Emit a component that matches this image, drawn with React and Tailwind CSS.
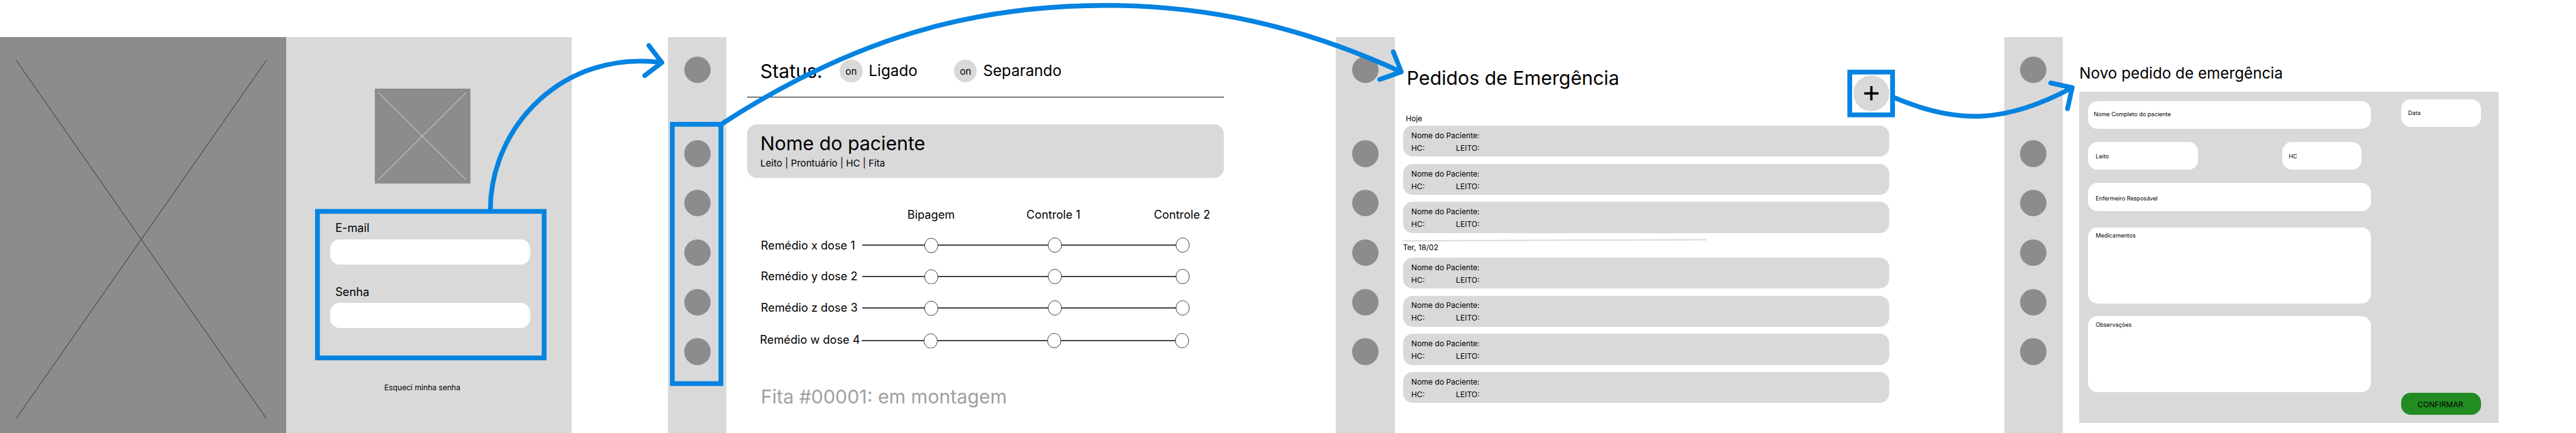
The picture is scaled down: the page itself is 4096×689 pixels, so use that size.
const menuItems = [0, 1, 2, 3, 4];

function Rail() {
  return (
    <aside className="flex w-[93.3px] shrink-0 flex-col items-center bg-[#d9d9d9] pt-[31.4px]">
      <span className="size-[42.4px] shrink-0 rounded-full bg-[#8c8c8c]" />
      <div className="mt-[90.9px] flex flex-col gap-[36.4px]">
        {menuItems.map((i) => (
          <span key={i} className="size-[42.4px] rounded-full bg-[#8c8c8c]" />
        ))}
      </div>
    </aside>
  );
}

function Login() {
  return (
    <section className="flex w-[909.2px] shrink-0">
      <div className="w-[454.6px] bg-[#8c8c8c]">
        <svg className="block h-[630.4px] w-[454.6px]" viewBox="0 0 454.6 630.4" fill="none" stroke="#2e2e2e" strokeWidth="0.9">
          <path d="M26 37.3 423.3 606.6M423.3 37.3 26 606.6" />
        </svg>
      </div>
      <div className="flex w-[454.6px] flex-col bg-[#d9d9d9]">
        <div className="mt-[82.2px] ml-[141.7px] size-[151.5px] bg-[#8c8c8c]">
          <svg className="block size-full" viewBox="0 0 151.5 151.5" fill="none" stroke="#f0f0f0" strokeWidth="0.9">
            <path d="M6 6.5 145 144.8M145 6.5 6 144.8" />
          </svg>
        </div>
        <form className="mt-[59px] ml-[70.4px] flex w-[317.6px] flex-col self-start">
          <label className="pl-[8.2px] text-[18.18px] leading-[22px]">E-mail</label>
          <div className="mt-[8.2px] h-[39.4px] rounded-[15.15px] bg-white" />
          <label className="mt-[32px] pl-[8.2px] text-[18.18px] leading-[22px]">Senha</label>
          <div className="mt-[7.3px] h-[39.4px] rounded-[15.15px] bg-white" />
        </form>
        <a className="mt-[87.6px] ml-[156.3px] text-[12.12px] leading-[15px]">Esqueci minha senha</a>
      </div>
    </section>
  );
}

function Toggle({ label, className }) {
  return (
    <div className={`flex items-center gap-[9.8px] ${className}`}>
      <span className="flex size-[36.4px] items-center justify-center rounded-full bg-[#d9d9d9] text-[15.15px] leading-none">on</span>
      <span className="text-[24.25px] leading-[30px]">{label}</span>
    </div>
  );
}

const doses = [
  { name: "Remédio x dose 1", row: "mt-[26.1px]", text: "" },
  { name: "Remédio y dose 2", row: "mt-[25.6px]", text: "pb-[1.8px]" },
  { name: "Remédio z dose 3", row: "mt-[26px]", text: "pb-[3.6px]" },
  { name: "Remédio w dose 4", row: "mt-[27.2px] -ml-[1.5px]", text: "pb-[3.4px]" },
];

function Dose({ name, row, text }) {
  return (
    <div className={`flex h-[24.2px] items-center ${row}`}>
      <span className={`w-[161.4px] shrink-0 text-[18.18px] leading-[22px] whitespace-nowrap ${text}`}>{name}</span>
      <svg className="block h-[24.2px] w-[522px] shrink-0" viewBox="0 0 522 24.2" fill="white" stroke="black">
        <path d="M0 12.1H500" strokeWidth="1.5" />
        <ellipse cx="109.7" cy="12.6" rx="10.6" ry="11.5" strokeWidth="0.76" />
        <ellipse cx="306.3" cy="12" rx="10.6" ry="11.5" strokeWidth="0.76" />
        <ellipse cx="509.6" cy="12" rx="10.6" ry="11.5" strokeWidth="0.76" />
      </svg>
    </div>
  );
}

function Dispenser() {
  return (
    <section className="ml-[152.9px] flex w-[909.2px] shrink-0">
      <Rail />
      <main className="ml-[32.6px] w-[757.7px]">
        <header className="flex h-[96px] items-center border-b border-black pt-[14px] pl-[20.8px]">
          <h1 className="w-[126.4px] text-[30.3px] leading-[36px]">Status:</h1>
          <Toggle label="Ligado" className="w-[181.8px]" />
          <Toggle label="Separando" />
        </header>
        <div className="mt-[43.5px] h-[84.9px] rounded-[15.15px] bg-[#d9d9d9] pt-[11.8px] pl-[21px]">
          <h2 className="text-[30.3px] leading-[36px]">Nome do paciente</h2>
          <p className="mt-[4.2px] text-[15.15px] leading-[20px]">Leito | Prontuário | HC | Fita</p>
        </div>
        <div className="mt-[47.3px] flex pl-[254.8px] text-[18.18px] leading-[22px]">
          <span className="w-[189.3px]">Bipagem</span>
          <span className="w-[202.7px]">Controle 1</span>
          <span>Controle 2</span>
        </div>
        <div className="pl-[21.9px]">
          {doses.map((d) => (
            <Dose key={d.name} {...d} />
          ))}
          <p className="mt-[59.3px] text-[30.3px] leading-[36px] text-[#a0a0a0]">Fita #00001: em montagem</p>
        </div>
      </main>
    </section>
  );
}

function Order() {
  return (
    <li className="h-[49.25px] rounded-[15.15px] bg-[#d9d9d9] pt-[5.8px] pl-[13.4px] text-[12.12px] leading-[20px]">
      <p>Nome do Paciente:</p>
      <p className="flex">
        <span className="w-[71px]">HC:</span>
        <span>LEITO:</span>
      </p>
    </li>
  );
}

function Orders() {
  return (
    <section className="ml-[153.2px] flex w-[909.2px] shrink-0">
      <Rail />
      <main className="ml-[12.9px] w-[773.6px]">
        <header className="flex h-[128px] justify-between">
          <h1 className="mt-[47.9px] ml-[6.2px] text-[30.3px] leading-[36px]">Pedidos de Emergência</h1>
          <button className="mt-[61.2px] size-[56.8px] rounded-full bg-[#d9d9d9]">
            <svg className="block size-full" viewBox="0 0 56.8 56.8" stroke="black" strokeWidth="3.7">
              <path d="M17.3 28.6H39.9M28.6 16.9V39.7" />
            </svg>
          </button>
        </header>
        <p className="-mt-[5.3px] pl-[4.5px] text-[12.12px] leading-[15px]">Hoje</p>
        <ul className="mt-[3.9px] flex flex-col gap-[11.37px]">
          {[1, 2, 3].map((i) => (
            <Order key={i} />
          ))}
        </ul>
        <svg className="mt-[9.3px] block h-[5px] w-[483px]" viewBox="0 0 483 5" stroke="#d9d9d9" strokeWidth="2">
          <path d="M0 3.2 483 1.5" />
        </svg>
        <p className="mt-[1.3px] text-[12.12px] leading-[15px]">Ter, 18/02</p>
        <ul className="mt-[8.8px] flex flex-col gap-[11.37px]">
          {[1, 2, 3, 4].map((i) => (
            <Order key={i} />
          ))}
        </ul>
      </main>
    </section>
  );
}

function Field({ label, className }) {
  return <div className={`flex rounded-[15.15px] bg-white text-[9.09px] leading-[11px] ${className}`}>{label}</div>;
}

function NewOrder() {
  return (
    <section className="ml-[153px] flex w-[909.2px] shrink-0">
      <Rail />
      <main className="ml-[25.8px] w-[667.6px]">
        <h1 className="mt-[43.9px] pl-[0.6px] text-[24.25px] leading-[30px]">Novo pedido de emergência</h1>
        <div className="mt-[14px] flex h-[526.7px] justify-between bg-[#d9d9d9] pr-[28.1px] pl-[14.6px]">
          <div className="flex w-[449.4px] flex-col pt-[14.1px]">
            <Field label="Nome Completo do paciente" className="h-[44.4px] pt-[15.4px] pl-[8.8px]" />
            <div className="mt-[20.7px] flex justify-between pr-[14.6px]">
              <Field label="Leito" className="h-[44.4px] w-[174.9px] pt-[17.6px] pl-[12px]" />
              <Field label="HC" className="h-[44.4px] w-[126.5px] pt-[17.6px] pl-[10.6px]" />
            </div>
            <Field label="Enfermeiro Resposável" className="mt-[21.2px] h-[44.4px] pt-[18.3px] pl-[12px]" />
            <Field label="Medicamentos" className="mt-[26.4px] h-[121.2px] pt-[7.3px] pl-[12px]" />
            <Field label="Observações" className="mt-[20.1px] h-[121.2px] pt-[8.2px] pl-[12px]" />
          </div>
          <div className="flex w-[126.8px] flex-col justify-between pt-[11.2px] pb-[12.9px]">
            <Field label="Data" className="h-[44.4px] pt-[16.1px] pl-[10.6px]" />
            <button className="flex h-[35.6px] items-center justify-center rounded-[15.15px] bg-[#228b22] pt-[1.2px] pr-[3px] text-[12.12px] leading-[15px]">
              CONFIRMAR
            </button>
          </div>
        </div>
      </main>
    </section>
  );
}

function FlowOverlay() {
  return (
    <svg
      className="pointer-events-none absolute inset-0 h-[689px] w-[4096px]"
      viewBox="0 0 4096 689"
      fill="none"
      stroke="#0583e1"
      strokeWidth="7.58"
      strokeLinecap="round"
      strokeLinejoin="round"
    >
      <g strokeLinejoin="miter">
        <rect x="504.8" y="336.4" width="360.4" height="233.1" />
        <rect x="1069" y="197.8" width="77.3" height="412.6" />
        <rect x="2941.2" y="114.7" width="68.1" height="68.1" />
      </g>
      <path d="M779.7 334C779.7 202 895 79 1052.4 99.5M1031.7 72.5 1052.4 99.5 1025.2 120.3" />
      <path d="M1148 197C1358 60.5 1548 8.6 1758 8.6C1918 8.6 2068 41 2228 114.4M2215.5 82.3 2228 114.4 2193.9 126.3" />
      <path d="M3013 155.8C3113 198 3190 196 3294.9 139.5M3260.8 132 3294.9 139.5 3287.5 172.9" />
    </svg>
  );
}

export default function App() {
  return (
    <div className="relative flex h-[689px] w-[4096px] overflow-hidden bg-white pt-[58.6px] font-['Inter',sans-serif] text-black">
      <Login />
      <Dispenser />
      <Orders />
      <NewOrder />
      <FlowOverlay />
    </div>
  );
}
